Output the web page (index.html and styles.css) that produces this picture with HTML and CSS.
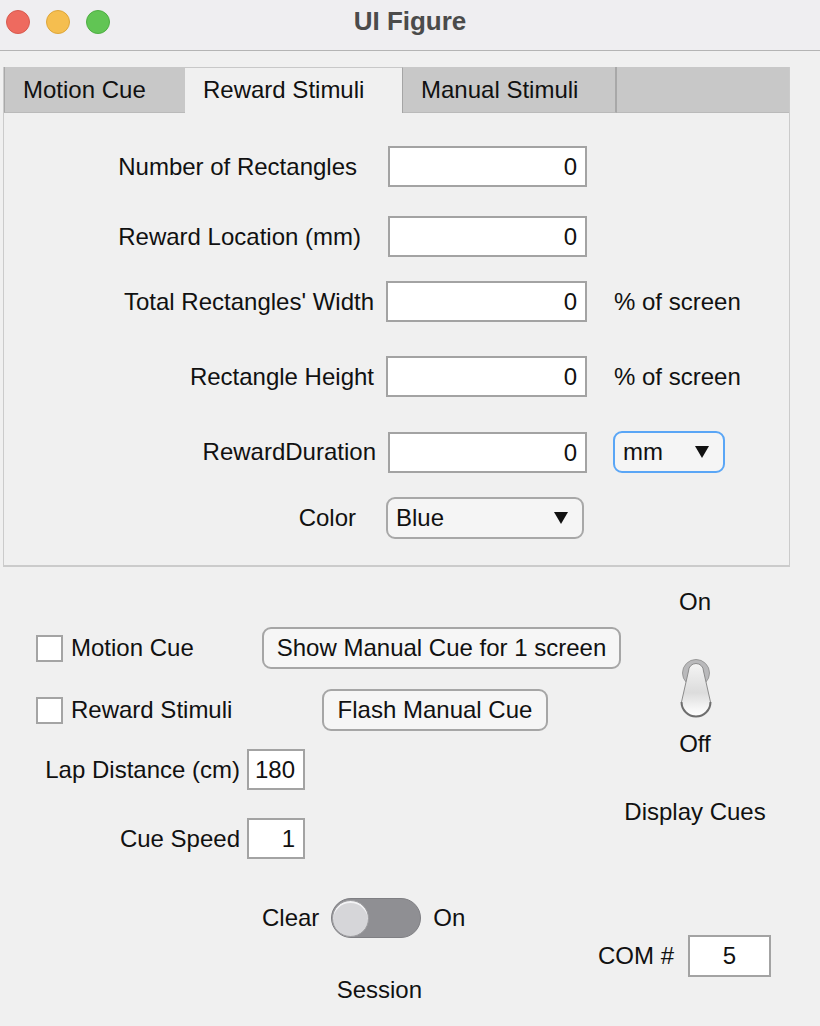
FILE: index.html
```html
<!DOCTYPE html>
<html lang="en">
<head>
<meta charset="utf-8">
<title>UI Figure</title>
<link rel="stylesheet" href="styles.css">
</head>
<body>
<div class="window">
  <header class="titlebar">
    <div class="lights">
      <span class="light light-red"></span>
      <span class="light light-yellow"></span>
      <span class="light light-green"></span>
    </div>
    <div class="title">UI Figure</div>
    <div></div>
  </header>

  <section class="tabpanel">
    <div class="tabstrip">
      <div class="tab tab-first">Motion Cue</div>
      <div class="tab tab-active">Reward Stimuli</div>
      <div class="tab tab-third">Manual Stimuli</div>
      <div class="tab tab-rest"></div>
    </div>
    <div class="form">
      <div class="row row-1">
        <label class="lbl lbl-in-19">Number of Rectangles</label>
        <div class="field">0</div>
      </div>
      <div class="row row-2">
        <label class="lbl lbl-in-15">Reward Location (mm)</label>
        <div class="field">0</div>
      </div>
      <div class="row row-3">
        <label class="lbl lbl-in-2">Total Rectangles' Width</label>
        <div class="field field-shift">0</div>
        <span class="unit">% of screen</span>
      </div>
      <div class="row row-4">
        <label class="lbl lbl-in-2">Rectangle Height</label>
        <div class="field field-shift">0</div>
        <span class="unit">% of screen</span>
      </div>
      <div class="row row-5">
        <label class="lbl">RewardDuration</label>
        <div class="field">0</div>
        <div class="dropdown dropdown-focus"><span>mm</span><span class="caret"></span></div>
      </div>
      <div class="row row-6">
        <label class="lbl lbl-in-20">Color</label>
        <div class="dropdown dropdown-color field-shift"><span>Blue</span><span class="caret"></span></div>
      </div>
    </div>
  </section>

  <section class="bottom">
    <div class="left">
      <div class="brow brow-a">
        <div class="check check-a"><span class="box"></span><span>Motion Cue</span></div>
        <button class="btn btn-show">Show Manual Cue for 1 screen</button>
      </div>
      <div class="brow brow-b">
        <div class="check check-b"><span class="box"></span><span>Reward Stimuli</span></div>
        <button class="btn btn-flash">Flash Manual Cue</button>
      </div>
      <div class="brow brow-c">
        <label class="blbl">Lap Distance (cm)</label>
        <div class="field field-small">180</div>
      </div>
      <div class="brow brow-d">
        <label class="blbl">Cue Speed</label>
        <div class="field field-small">1</div>
      </div>
    </div>

    <div class="right">
      <div class="on-label">On</div>
      <svg class="lever" width="34" height="60" viewBox="0 0 34 60">
        <defs>
          <linearGradient id="lev" x1="0" y1="0" x2="0" y2="1">
            <stop offset="0" stop-color="#f4f4f4"/>
            <stop offset="0.55" stop-color="#dcdcdc"/>
            <stop offset="0.85" stop-color="#f6f6f6"/>
            <stop offset="1" stop-color="#ffffff"/>
          </linearGradient>
        </defs>
        <circle cx="17" cy="15" r="13.5" fill="#b9b9bb" stroke="#9a9a9a" stroke-width="1"/>
        <path d="M9.5,13 A7.5,7.5 0 0 1 24.5,13 L31.5,44 A14.5,14.5 0 0 1 2.5,44 Z" fill="url(#lev)" stroke="#8c8c8c" stroke-width="1"/>
        <path d="M31.5,44 A14.5,14.5 0 0 1 2.5,44" fill="none" stroke="#6e6e6e" stroke-width="2"/>
      </svg>
      <div class="off-label">Off</div>
      <div class="display-label">Display Cues</div>
    </div>

    <div class="footer">
      <div class="session">
        <span class="sw-text">Clear</span>
        <div class="switch"><span class="knob"></span></div>
        <span class="sw-text">On</span>
        <span class="session-label">Session</span>
      </div>
      <div class="com">
        <span>COM #</span>
        <div class="field field-com">5</div>
      </div>
    </div>
  </section>
</div>
</body>
</html>
```

FILE: styles.css
```css
* { box-sizing: border-box; }

html, body {
  margin: 0;
  padding: 0;
}

body {
  background: #f0f0f0;
  font-family: "Liberation Sans", Arial, Helvetica, sans-serif;
  font-size: 24px;
  color: #111;
}

.window {
  width: 820px;
  height: 1026px;
  overflow: hidden;
  background: #f0f0f0;
}

/* Title bar */
.titlebar {
  height: 51px;
  border-bottom: 1px solid #b4b4b4;
  background: #efeef1;
  display: grid;
  grid-template-columns: 1fr auto 1fr;
  align-items: start;
}

.lights {
  display: flex;
  gap: 16px;
  padding: 10px 0 0 6px;
}

.light {
  width: 24px;
  height: 24px;
  border-radius: 50%;
  display: block;
}
.light-red { background: #ee6a5f; border: 1px solid #d85a4f; }
.light-yellow { background: #f5be4f; border: 1px solid #dea63a; }
.light-green { background: #61c554; border: 1px solid #4eae43; }

.title {
  font-weight: bold;
  font-size: 26px;
  line-height: 30px;
  padding-top: 6px;
  color: #4b4b4b;
}

/* Tab panel */
.tabpanel {
  margin: 16px 0 0 3px;
  width: 787px;
  height: 500px;
  border: 1px solid #cbcbcb;
  border-top: none;
  border-bottom: 2px solid #cbcbcb;
}

.tabstrip {
  display: flex;
  height: 46px;
  background: #c8c8c8;
}

.tab {
  height: 46px;
  line-height: 46px;
  padding-left: 18px;
  background: #c8c8c8;
  border-bottom: 1px solid #bababa;
  white-space: nowrap;
}
.tab-first { width: 181px; border-left: 1px solid #a9a9a9; }
.tab-active {
  width: 218px;
  background: #f0f0f0;
  border-top: 1px solid #c8c8c8;
  border-bottom: none;
  border-right: 1px solid #a5a5a5;
  line-height: 44px;
}
.tab-third { width: 214px; border-right: 2px solid #a8a8a8; }
.tab-rest { flex: 1; }

.form {
  display: flex;
  flex-direction: column;
}

.row {
  display: grid;
  grid-template-columns: 372px 199px auto;
  column-gap: 12px;
  align-items: center;
  height: 41px;
}
.row-1 { margin-top: 33px; }
.row-2 { margin-top: 29px; }
.row-3 { margin-top: 24px; }
.row-4 { margin-top: 34px; }
.row-5 { margin-top: 34px; }
.row-6 { margin-top: 25px; height: 42px; }

.lbl {
  text-align: right;
  white-space: nowrap;
}
.lbl-in-19 { padding-right: 19px; }
.lbl-in-15 { padding-right: 15px; }
.lbl-in-2 { padding-right: 2px; }
.lbl-in-20 { padding-right: 20px; }

.field {
  height: 41px;
  background: #fff;
  border: 2px solid #a3a3a3;
  text-align: right;
  padding-right: 8px;
  line-height: 37px;
  white-space: nowrap;
}
.field-shift { margin-left: -2px; }

.unit {
  margin-left: 15px;
  white-space: nowrap;
}

.dropdown {
  height: 42px;
  border: 2px solid #a8a8a8;
  border-radius: 9px;
  background: #f5f5f5;
  display: flex;
  align-items: center;
  justify-content: space-between;
  padding: 0 14px 0 8px;
}
.dropdown-focus {
  width: 112px;
  margin-left: 14px;
  border-color: #5aa6f6;
}
.dropdown-color { width: 198px; }

.caret {
  width: 0;
  height: 0;
  border-left: 7.5px solid transparent;
  border-right: 7.5px solid transparent;
  border-top: 12px solid #111;
}

/* Bottom area */
.bottom {
  display: grid;
  grid-template-columns: 622px 146px 52px;
  grid-template-areas:
    "left right ."
    "footer footer footer";
  align-items: start;
}

.left { grid-area: left; padding-top: 60px; }
.right {
  grid-area: right;
  display: flex;
  flex-direction: column;
  align-items: center;
  padding-top: 21px;
}
.footer { grid-area: footer; display: flex; align-items: flex-start; }

.brow {
  display: flex;
  align-items: center;
  height: 42px;
}
.brow-b { margin-top: 20px; }
.brow-c { margin-top: 18px; height: 41px; }
.brow-d { margin-top: 28px; height: 41px; }

.check {
  display: flex;
  align-items: center;
  gap: 8px;
  padding-left: 36px;
  white-space: nowrap;
}
.check-a { width: 262px; }
.check-b { width: 322px; }

.box {
  width: 27px;
  height: 27px;
  background: #fff;
  border: 2px solid #a4a4a4;
  display: block;
}

.btn {
  font: inherit;
  color: #111;
  height: 42px;
  background: #f6f6f6;
  border: 2px solid #a6a6a6;
  border-radius: 9px;
  padding: 0;
  text-align: center;
  white-space: nowrap;
}
.btn-show { width: 359px; }
.btn-flash { width: 226px; }

.blbl {
  width: 240px;
  text-align: right;
  white-space: nowrap;
  margin-right: 7px;
}

.field-small { width: 58px; }

.on-label, .off-label, .display-label {
  line-height: 28px;
  white-space: nowrap;
}
.lever { display: block; margin-top: 42px; margin-left: 2px; }
.off-label { margin-top: 12px; }
.display-label { margin-top: 40px; }

/* Session switch */
.session {
  display: grid;
  grid-template-columns: auto 90px auto;
  column-gap: 12px;
  align-items: center;
  margin: 39px 0 0 262px;
}
.sw-text { line-height: 40px; }
.switch {
  width: 90px;
  height: 40px;
  border-radius: 20px;
  background: #8f8f93;
  border: 1px solid #7f7f83;
  padding: 1px;
}
.knob {
  display: block;
  width: 37px;
  height: 37px;
  border-radius: 50%;
  background: #d6d6d9;
  border: 1px solid #9d9da0;
  box-shadow: inset 0 2px 0 #f3f3f5;
  margin-left: -1px;
  margin-top: -0.5px;
}
.session-label {
  grid-column: 2;
  justify-self: center;
  margin-top: 38px;
  margin-left: 6px;
  line-height: 28px;
  white-space: nowrap;
}

.com {
  margin: 76px 49px 0 auto;
  display: flex;
  align-items: center;
  gap: 14px;
}
.field-com {
  width: 83px;
  height: 42px;
  text-align: center;
  padding-right: 0;
  line-height: 38px;
}
```
